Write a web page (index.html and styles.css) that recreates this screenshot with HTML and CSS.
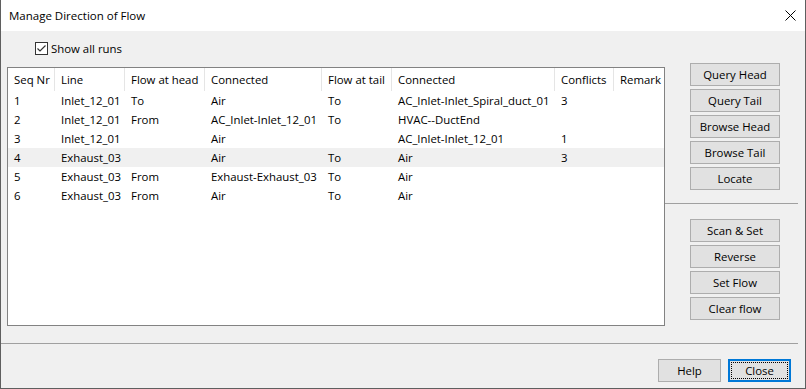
FILE: index.html
```html
<!DOCTYPE html>
<html lang="en">
<head>
    <meta charset="UTF-8">
    <meta name="viewport" content="width=device-width, initial-scale=1.0">
    <title>Manage Direction of Flow</title>
    <link rel="stylesheet" href="styles.css">
</head>
<body>
    <div class="window">
        <!-- Title bar -->
        <div class="titlebar">
            <span class="title">Manage Direction of Flow</span>
            <svg class="close-x" width="11" height="11" viewBox="0 0 11 11">
                <path d="M0.5 0.5 L10.5 10.5 M10.5 0.5 L0.5 10.5" stroke="#000" stroke-width="1" fill="none"/>
            </svg>
        </div>

        <div class="body">
            <div class="main">
                <!-- Runs list -->
                <div class="left">
                    <label class="check">
                        <span class="box">
                            <svg width="11" height="11" viewBox="0 0 11 11">
                                <path d="M1.5 5.5 L4 8 L9.5 2.5" stroke="#333" stroke-width="1.2" fill="none"/>
                            </svg>
                        </span>
                        Show all runs
                    </label>

                    <div class="list">
                        <table>
                            <colgroup>
                                <col class="c-seq">
                                <col class="c-line">
                                <col class="c-fhead">
                                <col class="c-conn">
                                <col class="c-ftail">
                                <col class="c-conn2">
                                <col class="c-conf">
                                <col class="c-rem">
                            </colgroup>
                            <thead>
                                <tr>
                                    <th>Seq Nr</th>
                                    <th>Line</th>
                                    <th>Flow at head</th>
                                    <th>Connected</th>
                                    <th>Flow at tail</th>
                                    <th>Connected</th>
                                    <th>Conflicts</th>
                                    <th>Remark</th>
                                </tr>
                            </thead>
                            <tbody>
                                <tr>
                                    <td>1</td><td>Inlet_12_01</td><td>To</td><td>Air</td>
                                    <td>To</td><td>AC_Inlet-Inlet_Spiral_duct_01</td><td>3</td><td></td>
                                </tr>
                                <tr>
                                    <td>2</td><td>Inlet_12_01</td><td>From</td><td>AC_Inlet-Inlet_12_01</td>
                                    <td>To</td><td>HVAC--DuctEnd</td><td></td><td></td>
                                </tr>
                                <tr>
                                    <td>3</td><td>Inlet_12_01</td><td></td><td>Air</td>
                                    <td></td><td>AC_Inlet-Inlet_12_01</td><td>1</td><td></td>
                                </tr>
                                <tr class="hot">
                                    <td>4</td><td>Exhaust_03</td><td></td><td>Air</td>
                                    <td>To</td><td>Air</td><td>3</td><td></td>
                                </tr>
                                <tr>
                                    <td>5</td><td>Exhaust_03</td><td>From</td><td>Exhaust-Exhaust_03</td>
                                    <td>To</td><td>Air</td><td></td><td></td>
                                </tr>
                                <tr>
                                    <td>6</td><td>Exhaust_03</td><td>From</td><td>Air</td>
                                    <td>To</td><td>Air</td><td></td><td></td>
                                </tr>
                            </tbody>
                        </table>
                    </div>
                </div>

                <!-- Action buttons -->
                <div class="side">
                    <div class="group">
                        <button class="btn">Query Head</button>
                        <button class="btn">Query Tail</button>
                        <button class="btn">Browse Head</button>
                        <button class="btn">Browse Tail</button>
                        <button class="btn">Locate</button>
                    </div>
                    <div class="side-sep"></div>
                    <div class="group">
                        <button class="btn">Scan &amp; Set</button>
                        <button class="btn">Reverse</button>
                        <button class="btn">Set Flow</button>
                        <button class="btn">Clear flow</button>
                    </div>
                </div>
            </div>

            <div class="hsep"></div>

            <div class="footer">
                <button class="btn small">Help</button>
                <button class="btn small default"><span class="focus">Close</span></button>
            </div>
        </div>
    </div>
</body>
</html>
```

FILE: styles.css
```css
* {
    margin: 0;
    padding: 0;
    box-sizing: border-box;
}

body {
    font-family: "Open Sans", "Liberation Sans", sans-serif;
    font-size: 11.4px;
    color: #000;
    background-color: #3a3f45;
}

.window {
    width: 806px;
    height: 389px;
    border: 1px solid #5f5f5f;
    border-top: none;
    background-color: #f0f0f0;
    display: flex;
    flex-direction: column;
}

.titlebar {
    height: 31px;
    background-color: white;
    display: flex;
    align-items: center;
    justify-content: space-between;
    padding: 0 9px 1px 8px;
}

.title {
    font-size: 11.5px;
}

.close-x {
    display: block;
}

.body {
    flex-grow: 1;
}

.main {
    display: flex;
    align-items: flex-start;
}

.left {
    width: 664px;
    padding: 11px 0 0 6px;
}

.check {
    display: flex;
    align-items: center;
    height: 13px;
    margin-left: 28px;
    margin-bottom: 12px;
}

.check .box {
    width: 13px;
    height: 13px;
    border: 1px solid #333;
    background-color: white;
    margin-right: 3px;
    display: block;
}

.check .box svg {
    display: block;
}

.list {
    width: 658px;
    height: 259px;
    border: 1px solid #828282;
    background-color: white;
    overflow: hidden;
}

table {
    table-layout: fixed;
    width: 666px;
    border-collapse: separate;
    border-spacing: 0;
}

.c-seq { width: 47px; }
.c-line { width: 70px; }
.c-fhead { width: 80px; }
.c-conn { width: 117px; }
.c-ftail { width: 70px; }
.c-conn2 { width: 163px; }
.c-conf { width: 59px; }
.c-rem { width: 60px; }

th {
    height: 23px;
    padding: 0 0 0 6px;
    font-weight: normal;
    text-align: left;
    white-space: nowrap;
    overflow: hidden;
    box-shadow: inset -1px 0 0 #e5e5e5;
}

td {
    height: 19px;
    line-height: 19px;
    padding: 0 0 0 6px;
    white-space: nowrap;
    overflow: hidden;
}

tr.hot td {
    background-color: #f0f0f0;
}

.side {
    width: 133px;
    padding-top: 32px;
}

.group {
    display: flex;
    flex-direction: column;
    gap: 3px;
    padding-left: 25px;
}

.side-sep {
    height: 1px;
    background-color: #a0a0a0;
    margin: 13px 0 15px 0;
}

.btn {
    width: 90px;
    height: 23px;
    font-family: inherit;
    font-size: 11.4px;
    color: #000;
    background-color: #e1e1e1;
    border: 1px solid #adadad;
}

.hsep {
    height: 1px;
    background-color: #a0a0a0;
    margin: 17px 7px 0 0;
}

.footer {
    display: flex;
    justify-content: flex-end;
    gap: 7px;
    padding: 15px 14px 0 0;
}

.btn.small {
    width: 63px;
}

.btn.default {
    border: 2px solid #0078d7;
    padding: 1px;
}

.btn.default .focus {
    display: flex;
    align-items: center;
    justify-content: center;
    height: 100%;
    border: 1px dotted #000;
}
```
